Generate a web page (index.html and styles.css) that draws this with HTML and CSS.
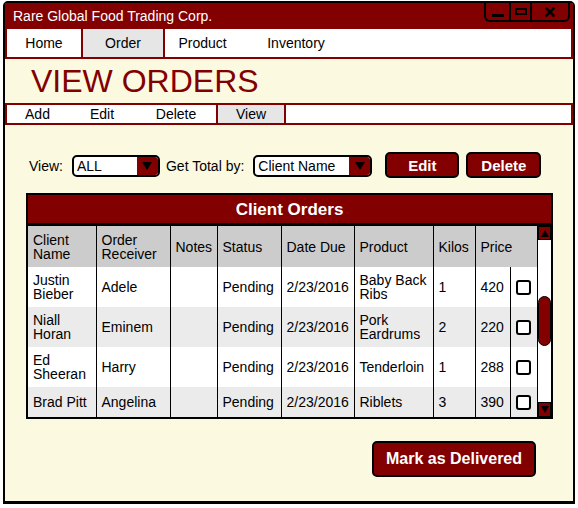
FILE: index.html
```html
<!DOCTYPE html>
<html>
<head>
<meta charset="utf-8">
<link rel="stylesheet" href="styles.css">
</head>
<body>
<div class="window">
  <div class="titlebar">
    <span class="title">Rare Global Food Trading Corp.</span>
    <div class="winctl">
      <span class="wbtn wbtn-min"><i class="ico-min"></i></span>
      <span class="wbtn wbtn-max"><i class="ico-max"></i></span>
      <span class="wbtn wbtn-close">
        <svg class="ico-close" width="10" height="10" viewBox="0 0 10 10"><path d="M1.5 1.5 L8.5 8.5 M8.5 1.5 L1.5 8.5" stroke="#000" stroke-width="2.6" stroke-linecap="square"/></svg>
      </span>
    </div>
  </div>
  <nav class="nav">
    <span class="tab tab-home">Home</span>
    <span class="tab tab-order active">Order</span>
    <span class="tab tab-product">Product</span>
    <span class="tab tab-inventory">Inventory</span>
  </nav>
  <h1 class="heading">VIEW ORDERS</h1>
  <div class="subnav">
    <span class="stab stab-add">Add</span>
    <span class="stab stab-edit">Edit</span>
    <span class="stab stab-delete">Delete</span>
    <span class="stab stab-view active">View</span>
  </div>
  <div class="controls">
    <span class="lbl">View:</span>
    <span class="select select-view"><span class="select-val">ALL</span><span class="select-arrow"><i class="tri-down"></i></span></span>
    <span class="lbl lbl-total">Get Total by:</span>
    <span class="select select-total"><span class="select-val">Client Name</span><span class="select-arrow"><i class="tri-down"></i></span></span>
    <button class="btn btn-edit">Edit</button>
    <button class="btn btn-delete">Delete</button>
  </div>
  <div class="orders">
    <div class="orders-title">Client Orders</div>
    <div class="orders-body">
      <table class="grid">
        <colgroup>
          <col class="c1"><col class="c2"><col class="c3"><col class="c4"><col class="c5"><col class="c6"><col class="c7"><col class="c8"><col class="c9">
        </colgroup>
        <thead>
          <tr class="head">
            <th>Client Name</th><th>Order Receiver</th><th class="nw">Notes</th><th class="nw">Status</th><th class="nw">Date Due</th><th class="nw">Product</th><th class="nw">Kilos</th><th class="nw" colspan="2">Price</th>
          </tr>
        </thead>
        <tbody>
          <tr class="row">
            <td>Justin Bieber</td><td>Adele</td><td></td><td>Pending</td><td class="nw">2/23/2016</td><td>Baby Back Ribs</td><td>1</td><td>420</td><td class="cb"><span class="check"></span></td>
          </tr>
          <tr class="row alt">
            <td>Niall Horan</td><td>Eminem</td><td></td><td>Pending</td><td class="nw">2/23/2016</td><td>Pork Eardrums</td><td>2</td><td>220</td><td class="cb"><span class="check"></span></td>
          </tr>
          <tr class="row">
            <td>Ed Sheeran</td><td>Harry</td><td></td><td>Pending</td><td class="nw">2/23/2016</td><td>Tenderloin</td><td>1</td><td>288</td><td class="cb"><span class="check"></span></td>
          </tr>
          <tr class="row alt last">
            <td class="nw">Brad Pitt</td><td>Angelina</td><td></td><td>Pending</td><td class="nw">2/23/2016</td><td>Riblets</td><td>3</td><td>390</td><td class="cb"><span class="check"></span></td>
          </tr>
        </tbody>
      </table>
      <div class="scrollbar">
        <span class="sb-btn"><i class="tri-up"></i></span>
        <span class="sb-track"><span class="sb-thumb"></span></span>
        <span class="sb-btn sb-btn-down"><i class="tri-down small"></i></span>
      </div>
    </div>
  </div>
  <div class="footer">
    <button class="btn btn-deliver">Mark as Delivered</button>
  </div>
</div>
</body>
</html>
```
FILE: styles.css
```css
html, body {
  margin: 0;
  padding: 0;
  background: #ffffff;
}

.window {
  margin: 1px 0 0 3px;
  width: 572px;
  height: 503px;
  box-sizing: border-box;
  border: 2px solid #000;
  border-bottom-width: 3px;
  border-radius: 5px 5px 0 0;
  background: #fcf9e1;
  display: flex;
  flex-direction: column;
  font-family: "Liberation Sans", Arial, sans-serif;
  font-size: 14px;
  color: #000;
}

/* Title bar */
.titlebar {
  height: 26px;
  flex: none;
  background: #820000;
  display: flex;
  align-items: flex-start;
}
.title {
  color: #fff;
  padding-left: 8px;
  line-height: 26px;
}
.winctl {
  margin-left: auto;
  margin-right: 3px;
  display: flex;
  height: 19px;
  box-sizing: border-box;
  border: 2px solid #000;
  border-top: 0;
  border-radius: 0 0 6px 6px;
}
.wbtn {
  display: flex;
  align-items: center;
  justify-content: center;
}
.wbtn-min {
  width: 23px;
  align-items: flex-end;
  padding-bottom: 3px;
  box-sizing: border-box;
}
.wbtn-max {
  width: 19px;
  border-left: 2px solid #000;
}
.wbtn-close {
  width: 36px;
  border-left: 2px solid #000;
}
.ico-min {
  display: block;
  width: 12px;
  height: 3px;
  background: #000;
}
.ico-max {
  display: block;
  width: 12px;
  height: 7px;
  box-sizing: border-box;
  border: 2px solid #000;
}
.ico-close {
  display: block;
}

/* Main nav */
.nav {
  height: 30px;
  flex: none;
  box-sizing: border-box;
  border: 2px solid #820000;
  border-top: 0;
  background: #fff;
  display: flex;
}
.tab {
  line-height: 29px;
  text-align: center;
  box-sizing: border-box;
}
.tab-home { width: 74px; }
.tab-order { width: 84px; }
.tab-product { width: 75px; }
.tab-inventory { width: 112px; }
.tab.active {
  background: #e6e6e6;
  border-left: 2px solid #820000;
  border-right: 2px solid #820000;
}

/* Heading */
.heading {
  margin: 0;
  flex: none;
  height: 44px;
  line-height: 44px;
  font-size: 32px;
  font-weight: normal;
  color: #820000;
  padding-left: 26px;
}

/* Sub nav */
.subnav {
  height: 22px;
  flex: none;
  box-sizing: border-box;
  border: 2px solid #820000;
  background: #fff;
  display: flex;
}
.stab {
  line-height: 18px;
  text-align: center;
  box-sizing: border-box;
}
.stab-add { width: 61px; }
.stab-edit { width: 68px; }
.stab-delete { width: 80px; }
.stab-view { width: 70px; }
.stab.active {
  background: #e6e6e6;
  border-left: 2px solid #820000;
  border-right: 2px solid #820000;
}

/* Controls */
.controls {
  margin-top: 27px;
  height: 26px;
  flex: none;
  display: flex;
  align-items: center;
  padding-left: 24px;
}
.lbl {
  white-space: nowrap;
  margin-top: 2px;
}
.lbl-total {
  margin-left: 6px;
}
.select {
  display: flex;
  height: 22px;
  margin-top: 2px;
  box-sizing: border-box;
  border: 2px solid #000;
  border-radius: 5px;
  background: #fff;
  overflow: hidden;
  margin-left: 9px;
}
.select-view { width: 88px; }
.select-total { width: 119px; margin-left: 9px; }
.select-val {
  flex: 1;
  line-height: 18px;
  padding-left: 3px;
  white-space: nowrap;
}
.select-arrow {
  width: 21px;
  background: #820000;
  display: flex;
  align-items: center;
  justify-content: center;
}
.tri-down {
  display: block;
  width: 0;
  height: 0;
  border-left: 5px solid transparent;
  border-right: 5px solid transparent;
  border-top: 8px solid #000;
}
.tri-down.small {
  border-left-width: 4px;
  border-right-width: 4px;
  border-top-width: 7px;
}
.tri-up {
  display: block;
  width: 0;
  height: 0;
  border-left: 4px solid transparent;
  border-right: 4px solid transparent;
  border-bottom: 7px solid #000;
}

.btn {
  font-family: "Liberation Sans", Arial, sans-serif;
  font-weight: bold;
  font-size: 15px;
  color: #fff;
  background: #820000;
  border: 2px solid #000;
  border-radius: 5px;
  padding: 0;
  box-sizing: border-box;
  cursor: pointer;
}
.btn-edit {
  width: 74px;
  height: 26px;
  margin-left: 13px;
}
.btn-delete {
  width: 75px;
  height: 26px;
  margin-left: 7px;
}

/* Orders table */
.orders {
  margin: 15px 0 0 21px;
  width: 527px;
  height: 226px;
  flex: none;
  box-sizing: border-box;
  border: 2px solid #000;
  display: flex;
  flex-direction: column;
}
.orders-title {
  height: 31px;
  box-sizing: border-box;
  border-bottom: 3px solid #000;
  background: #820000;
  color: #fff;
  font-weight: bold;
  font-size: 17px;
  line-height: 30px;
  text-align: center;
}
.orders-body {
  flex: 1;
  display: flex;
  background: #fff;
}
.grid {
  width: 509px;
  border-collapse: collapse;
  table-layout: fixed;
  border-spacing: 0;
}
.c1 { width: 68px; }
.c2 { width: 74px; }
.c3 { width: 47px; }
.c4 { width: 64px; }
.c5 { width: 73px; }
.c6 { width: 79px; }
.c7 { width: 42px; }
.c8 { width: 35px; }
.c9 { width: 27px; }

.grid th,
.grid td {
  padding: 0 3px 0 5px;
  font-weight: normal;
  font-size: 14px;
  line-height: 14px;
  text-align: left;
  vertical-align: middle;
  border-left: 1px solid #000;
}
.grid th:first-child,
.grid td:first-child {
  border-left: 0;
}
.grid .nw {
  white-space: nowrap;
}
.head {
  height: 41px;
  background: #cccccc;
}
.row {
  height: 40px;
  background: #fff;
}
.row.alt {
  background: #ebebeb;
}
.row.last {
  height: 30px;
}
.grid td.cb {
  padding: 0;
}
.check {
  display: block;
  width: 15px;
  height: 15px;
  box-sizing: border-box;
  border: 2px solid #000;
  border-radius: 3px;
  background: #fff;
  margin: 0 auto;
}

/* Scrollbar */
.scrollbar {
  width: 14px;
  box-sizing: border-box;
  border-left: 1px solid #000;
  display: flex;
  flex-direction: column;
  background: #fff;
}
.sb-btn {
  height: 14px;
  flex: none;
  box-sizing: border-box;
  background: #820000;
  border: 1px solid #000;
  display: flex;
  align-items: center;
  justify-content: center;
}
.sb-btn-down {
  height: 15px;
}
.sb-track {
  flex: 1;
  display: flex;
  flex-direction: column;
}
.sb-thumb {
  margin-top: 56px;
  height: 50px;
  box-sizing: border-box;
  background: #820000;
  border: 1px solid #000;
  border-radius: 7px;
}

/* Footer */
.footer {
  display: flex;
  justify-content: flex-end;
  padding-right: 37px;
  margin-top: 22px;
}
.btn-deliver {
  width: 164px;
  height: 36px;
  font-size: 16px;
}
```
